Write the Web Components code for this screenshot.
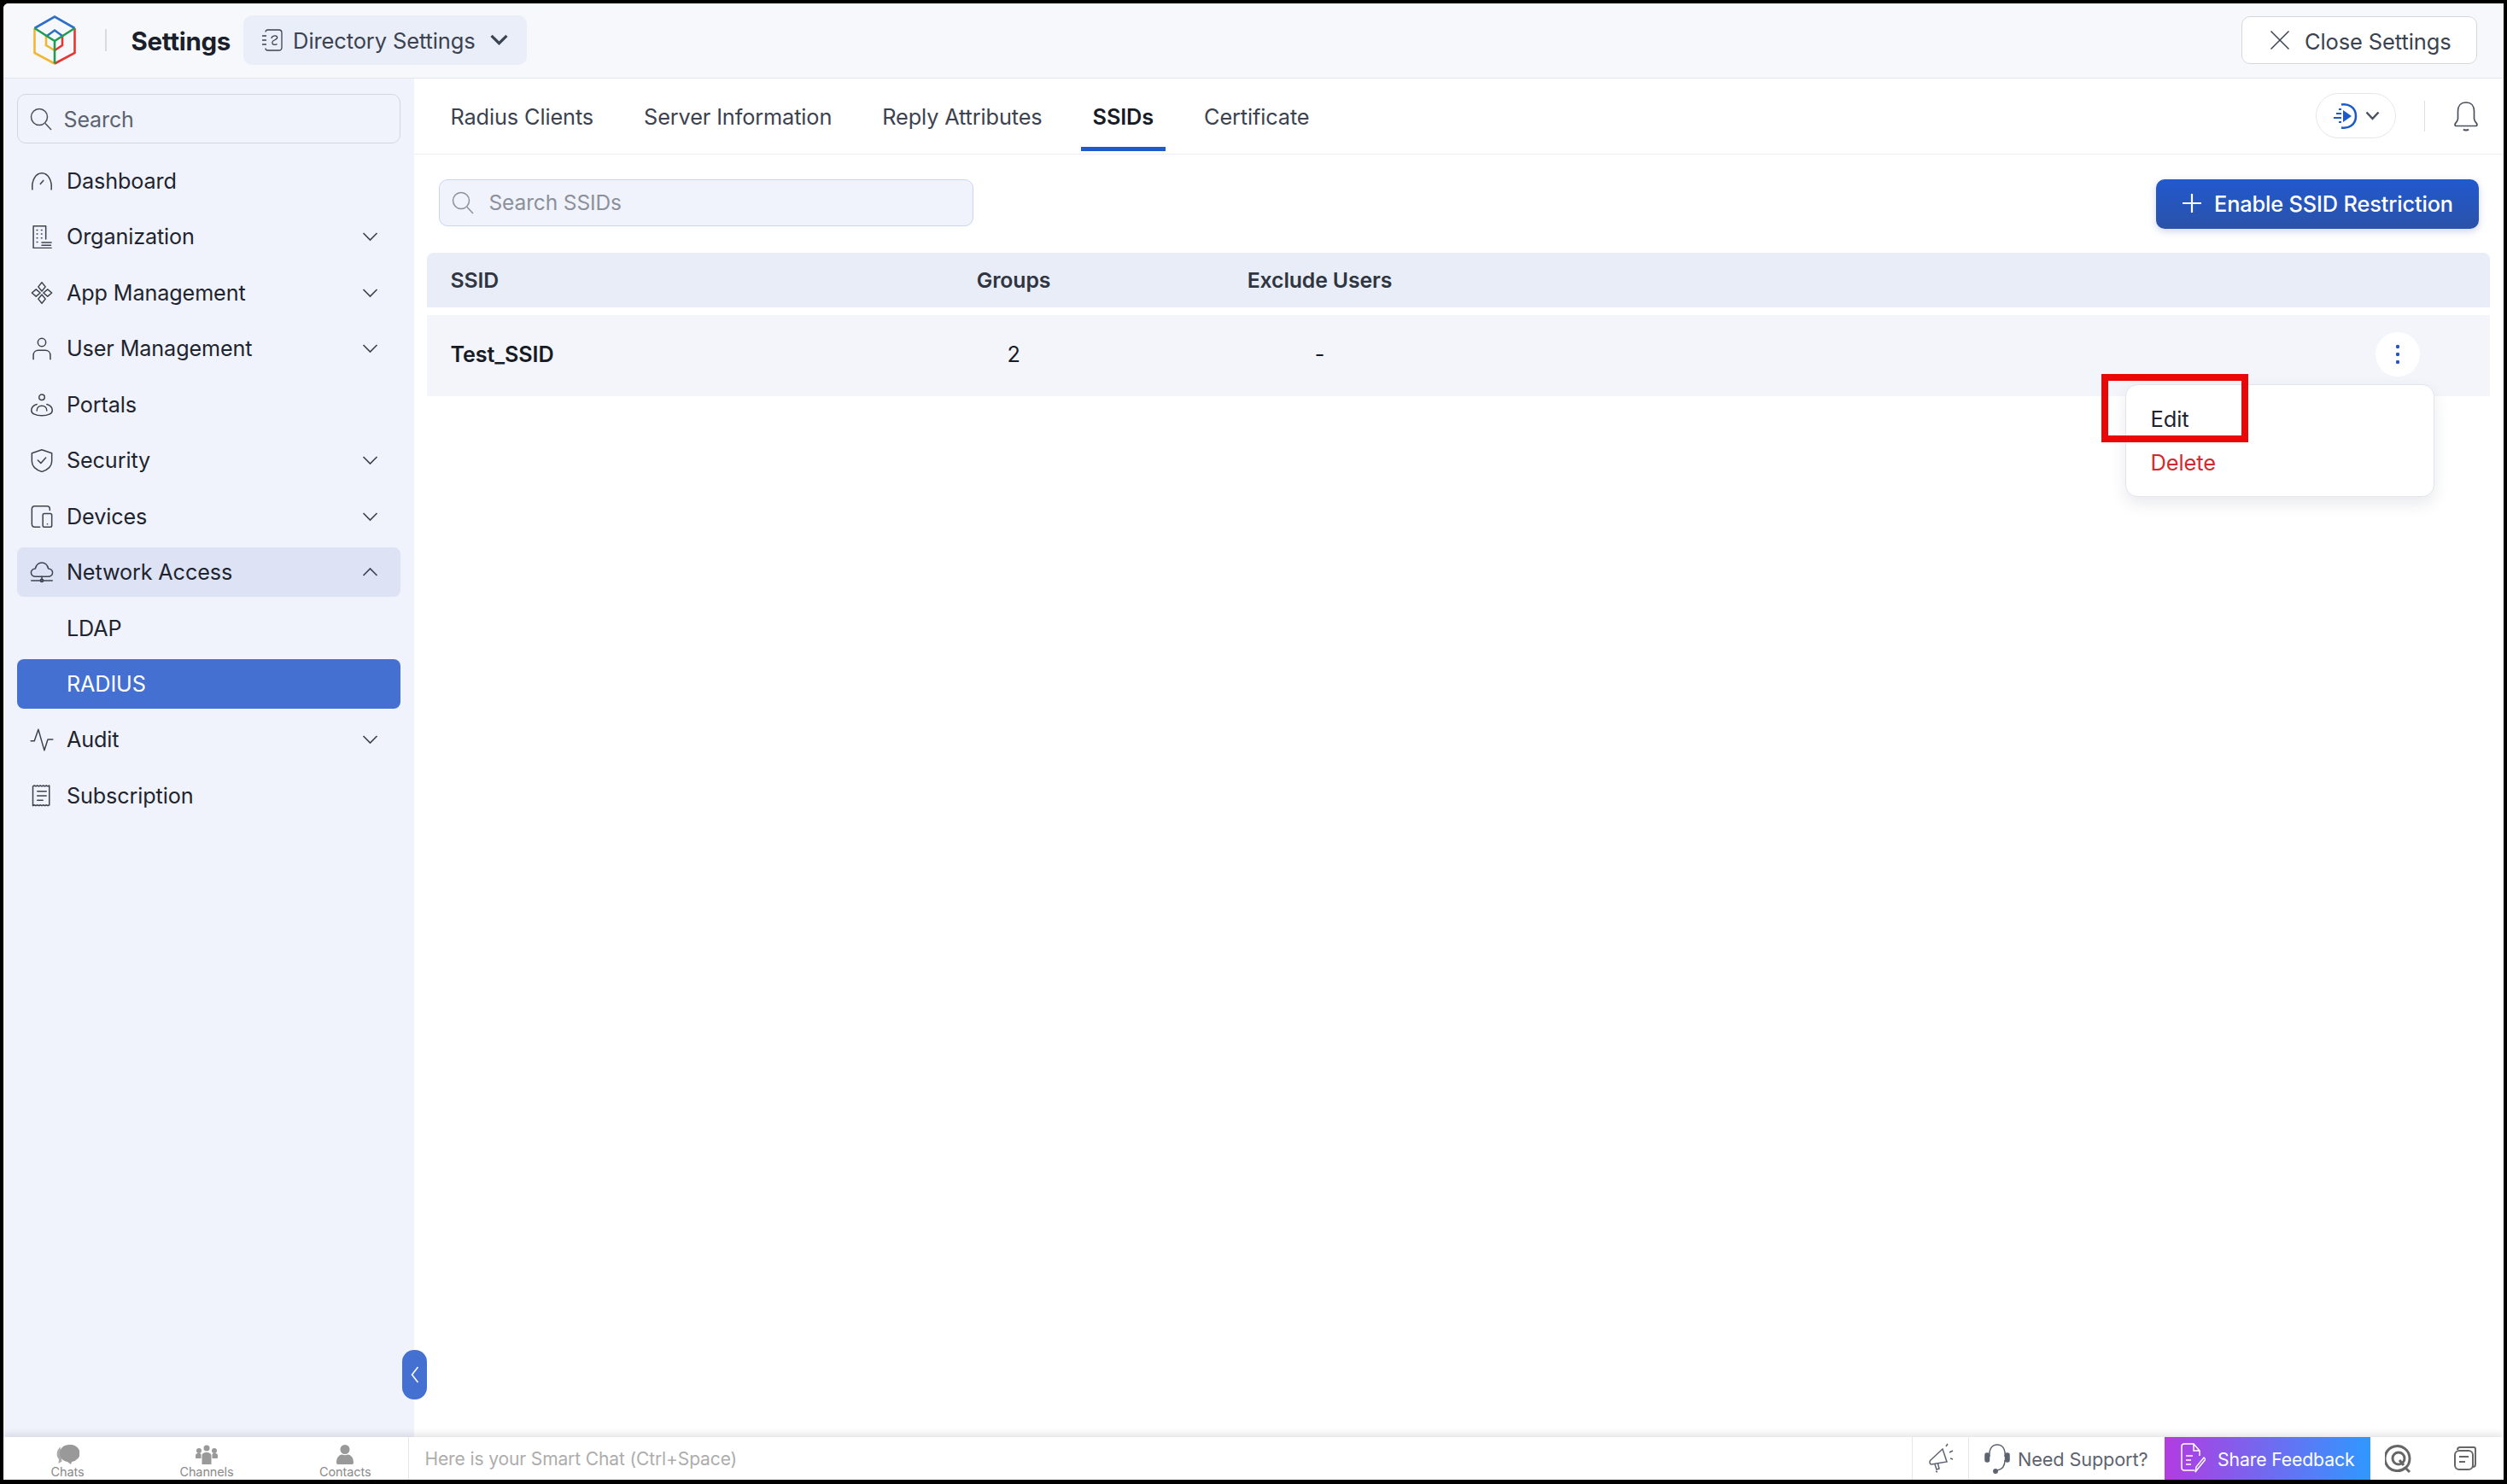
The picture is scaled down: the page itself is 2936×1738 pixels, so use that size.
<!DOCTYPE html>
<html>
<head>
<meta charset="utf-8">
<title>Settings</title>
<style>
  html, body { margin: 0; height: 100%; }
  body { background: #000; font-family: Inter, "Noto Sans", sans-serif; color: #1e2430; overflow: hidden; }
  svg[slot="icon"] { width: 28px; height: 28px; fill: none; stroke: #3d4450; stroke-width: 1.3; stroke-linecap: round; stroke-linejoin: round; }
</style>
</head>
<body>
<app-shell>
  <app-header slot="header"></app-header>
  <app-sidebar slot="sidebar">
    <nav-item label="Dashboard">
      <svg slot="icon" viewBox="0 0 24 24"><path d="M2.500 20.500C1.500 12 5.500 4 12 4s10.500 8 9.500 16.500"/><path d="M10.500 15l3-3.500"/></svg>
    </nav-item>
    <nav-item label="Organization" chevron="down">
      <svg slot="icon" viewBox="0 0 24 24"><path d="M3.500 23.500V1.500h12.500v13M3.500 23.500h18M12 18h9.500M12 20.800h9"/><path d="M7 5.500h.6M11.500 5.500h.6M7 9.500h.6M11.500 9.500h.6M7 13.500h.6M11.500 13.500h.6M7 17.500h.6"/></svg>
    </nav-item>
    <nav-item label="App Management" chevron="down">
      <svg slot="icon" viewBox="0 0 24 24"><path d="M12 1.500l3.600 4.400L12 10.300 8.400 5.900zM12 13.700l3.600 4.400-3.600 4.400-3.600-4.400zM6.200 8.400L10.400 12l-4.200 3.600L2 12zM17.800 8.400L22 12l-4.200 3.600L13.600 12z"/></svg>
    </nav-item>
    <nav-item label="User Management" chevron="down">
      <svg slot="icon" viewBox="0 0 24 24"><circle cx="12" cy="6" r="4"/><path d="M3.500 23v-4c0-3 2-5 5-5h7c3 0 5 2 5 5v4"/></svg>
    </nav-item>
    <nav-item label="Portals">
      <svg slot="icon" viewBox="0 0 24 24"><circle cx="12" cy="4.500" r="2.800"/><path d="M7 11.500c-3.500 1-5.500 3.500-5.500 6.200 0 3.300 4.500 5.300 10.500 5.300s10.500-2 10.500-5.300c0-2.700-2-5.200-5.500-6.200"/><path d="M7 18c0-3 2-5 5-5s5 2 5 5"/></svg>
    </nav-item>
    <nav-item label="Security" chevron="down">
      <svg slot="icon" viewBox="0 0 24 24"><path d="M12 1.500l10 3.500v8c0 5-4 8.500-10 10.500C6 21.500 2 18 2 13V5z"/><path d="M8 12l3 3 5-5.500"/></svg>
    </nav-item>
    <nav-item label="Devices" chevron="down">
      <svg slot="icon" viewBox="0 0 24 24"><path d="M20 5.500V4.500C20 2.500 19 1.500 17 1.500H5C3 1.500 2 2.500 2 4.500v15c0 2 1 3 3 3h5"/><rect x="13" y="9" width="9" height="13.500" rx="1.500"/><path d="M17.500 19.500h.2"/></svg>
    </nav-item>
    <nav-item label="Network Access" chevron="up" expanded>
      <svg slot="icon" viewBox="0 0 24 24"><path d="M6 16.500c-3 0-4.800-1.800-4.800-4s2-4 4.300-4C6.300 5 8.800 2.500 12 2.500s5.700 2.500 6.500 6c2.300 0 4.300 1.800 4.300 4s-1.800 4-4.800 4z"/><path d="M1.500 20.500h21M12 16.500v2.500"/><circle cx="12" cy="20.500" r="1.400"/></svg>
    </nav-item>
    <nav-item label="LDAP" sub></nav-item>
    <nav-item label="RADIUS" sub active></nav-item>
    <nav-item label="Audit" chevron="down">
      <svg slot="icon" viewBox="0 0 24 24"><path d="M1 13.500h3.500L8.500 2l6 21 3.500-11h5"/></svg>
    </nav-item>
    <nav-item label="Subscription">
      <svg slot="icon" viewBox="0 0 24 24"><path d="M3 2.500l1.500-.8 1.500.8 1.500-.8 1.500.8 1.500-.8 1.500.8 1.500-.8 1.500.8 1.500-.8 1.500.8 1.500-.8v19.500l-1.500.8-1.500-.8-1.500.8-1.500-.8-1.500.8-1.500-.8-1.500.8-1.500-.8-1.500.8-1.500-.8-1.500.8z"/><path d="M7.500 7.500h9M7.500 12h9M7.500 16.500h5.500"/></svg>
    </nav-item>
  </app-sidebar>
  <main-panel slot="main"></main-panel>
  <chat-bar slot="footer"></chat-bar>
</app-shell>

<script>
class AppShell extends HTMLElement {
  constructor() {
    super();
    this.attachShadow({ mode: "open" }).innerHTML = `
    <style>
      :host { display: grid; box-sizing: border-box; height: 1729px; margin: 4px 4px 5px 3.500px; background: #fff;
        grid-template-columns: 481px 1fr; grid-template-rows: 88px 1fr 50px; position: relative; overflow: hidden; border-radius: 6px 0 0 0;
        letter-spacing: -0.120px; }
      .h { grid-column: 1 / 3; display: block; }
      .s { display: block; min-height: 0; }
      .m { display: block; min-height: 0; }
      .f { grid-column: 1 / 3; display: block; }
      .handle { position: absolute; left: 467.500px; top: 1577px; width: 29px; height: 58px; background: #4470d2; border-radius: 14px;
        display: flex; align-items: center; justify-content: center; }
      .handle svg { width: 12px; height: 24px; fill: none; stroke: #fff; stroke-width: 1.600; }
    </style>
    <slot class="h" name="header"></slot>
    <slot class="s" name="sidebar"></slot>
    <slot class="m" name="main"></slot>
    <slot class="f" name="footer"></slot>
    <div class="handle"><svg viewBox="0 0 12 24"><path d="M9.500 3L2.500 12l7 9"/></svg></div>`;
  }
}

class AppHeader extends HTMLElement {
  constructor() {
    super();
    this.attachShadow({ mode: "open" }).innerHTML = `
    <style>
      :host { display: flex; align-items: center; height: 88px; box-sizing: border-box; background: #f7f8fc; border-bottom: 1.500px solid #e3e5ea;
        padding: 0 31px 2px 35px; font-family: Inter, sans-serif; }
      .logo { width: 50px; height: 58px; fill: none; stroke-width: 2.600; stroke-linejoin: miter; }
      .sep { width: 2px; height: 26px; background: #d9dbe0; margin: 0 29px 0 34px; }
      .title { font-size: 29.500px; font-weight: 700; color: #1a1f2b; letter-spacing: -0.300px; padding-top: 3px; }
      .pill { display: flex; align-items: center; margin-left: 15px; height: 58px; width: 332px; box-sizing: border-box; padding: 0 22px 0 21px;
        background: #e9eef9; border-radius: 10px; color: #3b4250; font-size: 25.500px; }
      .pill svg.doc { width: 25px; height: 26px; fill: none; stroke: #3b4250; stroke-width: 1.300; margin-right: 12px; }
      .pill span { flex: 1; white-space: nowrap; padding-top: 2px; }
      .pill svg.chev { width: 21px; height: 13px; fill: none; stroke: #3b4250; stroke-width: 3; }
      .close { margin-left: auto; display: flex; align-items: center; gap: 17px; box-sizing: border-box; height: 56px; width: 276px; padding-left: 32px;
        background: #fff; border: 1.500px solid #d5d7dd; border-radius: 10px; color: #3b4250; font-size: 25.500px; white-space: nowrap; }
      .close span { padding-top: 3px; }
      .close svg { width: 24px; height: 24px; fill: none; stroke: #3b4250; stroke-width: 1.500; }
    </style>
    <svg class="logo" viewBox="0 0 50 58">
      <path stroke="#2f6fc4" d="M1.500 15L25 1.500 48.500 15"/>
      <path stroke="#2f6fc4" d="M16 24l9-6.500 9 6.500"/>
      <path stroke="#f2b632" d="M1.500 15v29L25 56.500M15 24v11l10 6"/>
      <path stroke="#e5362f" d="M48.500 15v29L25 56.500M34 24v11l-9 6"/>
      <path stroke="#1f9d55" d="M1.500 15L25 30l23.500-15M25 30v26.500"/>
    </svg>
    <div class="sep"></div>
    <div class="title">Settings</div>
    <div class="pill">
      <svg class="doc" viewBox="0 0 25 26"><path d="M5 3.500c0-1.500 1-2.500 2.500-2.500h13c2 0 3.500 1.500 3.500 3.500v17c0 2-1.500 3.500-3.500 3.500h-13C6 25 5 24 5 22.500"/><path d="M1 8h5M1 13h5M1 18h5"/><path d="M12 11c0-3 5-4 6.500-2 1 2-1 3-3 4-2 .8-3 2-2.500 4 .5 1.500 4 2 5.500 .5"/></svg>
      <span>Directory Settings</span>
      <svg class="chev" viewBox="0 0 20 12"><path d="M1.500 1.500L10 10l8.500-8.500"/></svg>
    </div>
    <div class="close">
      <svg viewBox="0 0 24 24"><path d="M1.500 1.500l21 21M22.500 1.500l-21 21"/></svg>
      <span>Close Settings</span>
    </div>`;
  }
}

class AppSidebar extends HTMLElement {
  constructor() {
    super();
    this.attachShadow({ mode: "open" }).innerHTML = `
    <style>
      :host { display: flex; flex-direction: column; height: 100%; box-sizing: border-box; background: #f0f3fb; padding: 18px 16px 0 16.500px; font-family: Inter, sans-serif; }
      .search { display: flex; align-items: center; gap: 13.500px; box-sizing: border-box; height: 58px; padding-left: 14px; margin-bottom: 15px;
        border: 1.500px solid #d2d6de; border-radius: 10px; color: #5b6270; font-size: 25px; }
      .search span { padding-top: 1px; }
      .search svg { width: 26px; height: 28px; fill: none; stroke: #4a505c; stroke-width: 1.500; }
      .list { display: flex; flex-direction: column; gap: 7.450px; }
    </style>
    <div class="search">
      <svg viewBox="0 0 26 28"><circle cx="11" cy="12" r="9.500"/><path d="M18 19.500l7 7.500"/></svg>
      <span>Search</span>
    </div>
    <div class="list"><slot></slot></div>`;
  }
}

class NavItem extends HTMLElement {
  constructor() {
    super();
    const chev = this.getAttribute("chevron");
    const d = chev == "up" ? "M1.500 10L9.500 2l8 8" : "M1.500 2l8 8 8-8";
    this.attachShadow({ mode: "open" }).innerHTML = `
    <style>
      :host { display: flex; align-items: center; height: 58px; box-sizing: border-box; padding: 0 26px 0 15px; border-radius: 8px; color: #1e2430; font-size: 25.200px; }
      :host([expanded]) { background: #dde3f4; }
      :host([active]) { background: #4470d2; color: #fff; }
      .ic { width: 28px; height: 28px; margin-right: 15px; display: flex; flex: none; }
      .lb { flex: 1; white-space: nowrap; }
      .ch { width: 19px; height: 12px; fill: none; stroke: #3d4450; stroke-width: 1.700; }
    </style>
    <span class="ic"><slot name="icon"></slot></span>
    <span class="lb">${this.getAttribute("label")}</span>
    ${chev ? `<svg class="ch" viewBox="0 0 19 12"><path d="${d}"/></svg>` : ""}`;
  }
}

class TabBar extends HTMLElement {
  constructor() {
    super();
    this.attachShadow({ mode: "open" }).innerHTML = `
    <style>
      :host { display: flex; align-items: stretch; height: 88.500px; box-sizing: border-box; border-bottom: 1.500px solid #eceef2; padding-left: 29px; padding-right: 29px; font-family: Inter, sans-serif; }
      .tabs { display: flex; gap: 31px; }
      .tab { position: relative; padding: 2px 14px 0; display: flex; align-items: center; color: #3b4250; font-size: 25.300px; white-space: nowrap; box-sizing: border-box; }
      .tab.on { color: #161b26; font-weight: 600; }
      .tab.on::after { content: ""; position: absolute; left: 0; right: 0; bottom: 3px; height: 5px; background: #1f5acb; }
      .right { margin-left: auto; display: flex; align-items: center; }
      .guide { display: flex; align-items: center; justify-content: center; gap: 9px; width: 94px; height: 53px; box-sizing: border-box; border: 1.500px solid #e4e6ea; border-radius: 27px; }
      .guide svg.p { width: 30px; height: 32px; }
      .guide svg.c { width: 17px; height: 11px; fill: none; stroke: #4a505c; stroke-width: 2.500; }
      .sep { width: 1.500px; height: 36px; background: #dcdfe4; margin: 0 33px; }
      .bell { width: 30px; height: 36px; fill: none; stroke: #4a505c; stroke-width: 1.700; stroke-linejoin: round; }
    </style>
    <div class="tabs">
      <div class="tab">Radius Clients</div>
      <div class="tab">Server Information</div>
      <div class="tab">Reply Attributes</div>
      <div class="tab on">SSIDs</div>
      <div class="tab">Certificate</div>
    </div>
    <div class="right">
      <div class="guide">
        <svg class="p" viewBox="0 0 30 32"><path d="M11 2.500c8-1.500 17 3 17 13.500s-9 15-17 13.500" fill="none" stroke="#1f5acb" stroke-width="2.600"/><path d="M13 9l10 7-10 7z" fill="#1f5acb"/><path d="M8 8h3M5 13h6M2 18h9M8 23h3" stroke="#1f5acb" stroke-width="2.200" fill="none"/></svg>
        <svg class="c" viewBox="0 0 17 11"><path d="M1.500 1.500l7 7.500 7-7.500"/></svg>
      </div>
      <div class="sep"></div>
      <svg class="bell" viewBox="0 0 30 36"><path d="M2 28c0-2 3-3 3.500-7V12C5.500 6 9 2 15 2s9.500 4 9.500 10v9c.5 4 3.500 5 3.500 7 0 1-1 1.500-2 1.500H4c-1 0-2-.5-2-1.500z"/><path d="M12 33.500c1.500 1.300 4.500 1.300 6 0" stroke-width="2.200"/></svg>
    </div>`;
  }
}

class RowMenu extends HTMLElement {
  constructor() {
    super();
    this.attachShadow({ mode: "open" }).innerHTML = `
    <style>
      :host { position: absolute; right: 65px; top: 81px; width: 362.500px; height: 132px; box-sizing: border-box; background: #fff; border: 1.500px solid #e3e5ea; border-radius: 14px;
        box-shadow: 0 8px 18px rgba(40,50,80,.10); padding: 14px 29px; font-size: 25.500px; display: flex; flex-direction: column; z-index: 2; }
      .it { height: 51px; display: flex; align-items: center; color: #1e2430; }
      .it.del { color: #d32a2f; }
      .mark { position: absolute; left: -29px; top: -13px; width: 172px; height: 80px; box-sizing: border-box; border: 8px solid #e90707; }
    </style>
    <div class="it">Edit</div>
    <div class="it del">Delete</div>
    <div class="mark"></div>`;
  }
}

class SsidTable extends HTMLElement {
  constructor() {
    super();
    this.attachShadow({ mode: "open" }).innerHTML = `
    <style>
      :host { display: block; padding: 0 16px 0 15px; font-family: Inter, sans-serif; }
      .r { display: grid; grid-template-columns: 512px 295px 422px 1fr; align-items: center; box-sizing: border-box; padding-left: 28px; }
      .c { text-align: center; justify-self: center; white-space: nowrap; }
      .hd { height: 64px; background: #e9edf8; border-radius: 8px 8px 0 0; font-weight: 600; font-size: 24.800px; color: #2f3541; margin-bottom: 9px; }
      .row { position: relative; height: 95px; background: #f4f5fb; font-size: 25.200px; color: #161b26; padding-bottom: 3px; }
      .row b { font-weight: 600; }
      .kebab { position: absolute; right: 82px; top: 20px; width: 52px; height: 52px; border-radius: 50%; background: #fff; display: flex; align-items: center; justify-content: center; }
      .kebab svg { width: 6px; height: 26px; fill: #2a55b8; }
    </style>
    <div class="r hd"><div>SSID</div><div class="c">Groups</div><div class="c">Exclude Users</div></div>
    <div class="r row">
      <b>Test_SSID</b><div class="c">2</div><div class="c">-</div>
      <div class="kebab"><svg viewBox="0 0 6 26"><circle cx="3" cy="4" r="2.200"/><circle cx="3" cy="13" r="2.200"/><circle cx="3" cy="22" r="2.200"/></svg></div>
      <row-menu></row-menu>
    </div>`;
  }
}

class MainPanel extends HTMLElement {
  constructor() {
    super();
    this.attachShadow({ mode: "open" }).innerHTML = `
    <style>
      :host { display: block; height: 100%; background: #fff; font-family: Inter, sans-serif; }
      .bar { display: flex; justify-content: space-between; align-items: flex-start; padding: 29px 29px 29px 29px; height: 115.500px; box-sizing: border-box; }
      .find { display: flex; align-items: center; gap: 18px; width: 626px; height: 55px; box-sizing: border-box; padding-left: 14px; background: #f0f3fb; border: 1.500px solid #c8d6f0; border-radius: 10px; color: #8b909a; font-size: 24.500px; }
      .find svg { width: 26px; height: 28px; fill: none; stroke: #8b909a; stroke-width: 1.500; }
      .add { display: flex; align-items: center; gap: 14px; height: 58px; width: 378px; box-sizing: border-box; padding-left: 30px; padding-bottom: 1px; border-radius: 10px; color: #fff; font-size: 25.300px; font-weight: 500; white-space: nowrap;
        background: linear-gradient(#2259cf, #2a52a8); box-shadow: 0 3px 8px rgba(40,70,150,.22); }
      .add svg { width: 24px; height: 24px; fill: none; stroke: #fff; stroke-width: 2.200; }
    </style>
    <tab-bar></tab-bar>
    <div class="bar">
      <div class="find"><svg viewBox="0 0 26 28"><circle cx="11" cy="12" r="9.500"/><path d="M18 19.500l7 7.500"/></svg>Search SSIDs</div>
      <div class="add"><svg viewBox="0 0 24 24"><path d="M12 1v22M1 12h22"/></svg>Enable SSID Restriction</div>
    </div>
    <ssid-table></ssid-table>`;
  }
}

class ChatBar extends HTMLElement {
  constructor() {
    super();
    this.attachShadow({ mode: "open" }).innerHTML = `
    <style>
      :host { display: flex; align-items: stretch; height: 50px; background: #fff; box-shadow: 0 -3px 8px rgba(60,60,70,.14); position: relative; font-family: Inter, sans-serif; }
      .tabs { width: 475.500px; display: grid; grid-template-columns: 151px 175px 149.500px; box-sizing: border-box; border-right: 1.500px solid #e6e7ea; }
      .t { display: flex; flex-direction: column; align-items: center; padding-top: 9px; color: #8a8a8a; font-size: 14.500px; line-height: 14px; overflow: hidden; }
      .t svg { width: 28px; height: 23px; fill: #999; flex: none; margin-bottom: 2px; }
      .chat { flex: 1; display: flex; align-items: center; padding-left: 18.500px; padding-top: 1px; color: #adadad; font-size: 21px; white-space: nowrap; }
      .cell { display: flex; align-items: center; box-sizing: border-box; flex: none; }
      .mega { width: 67px; justify-content: center; border-left: 1.500px solid #e6e7ea; border-right: 1.500px solid #e6e7ea; }
      .mega svg, .sup svg { fill: none; stroke: #5d6470; stroke-width: 1.500; }
      .mega svg { width: 30px; height: 36px; }
      .sup { width: 229px; padding-left: 18px; gap: 9px; color: #5d6470; font-size: 21.700px; white-space: nowrap; }
      .sup span, .fb span { padding-top: 2px; }
      .sup svg { width: 30px; height: 40px; }
      .fb { width: 241px; gap: 14px; padding-left: 18px; color: #fff; font-size: 21.200px; white-space: nowrap; background: linear-gradient(90deg, #b23ce0, #2f98ff); }
      .fb svg { width: 30px; height: 40px; fill: none; stroke: #fff; stroke-width: 1.500; flex: none; }
      .ico { justify-content: center; }
      .ico svg { fill: none; stroke: #666; }
    </style>
    <div class="tabs">
      <div class="t"><svg viewBox="0 0 28 23"><path d="M5.500 2.500C1.500 6 0 13 4 17l-.5 5 4-2.500" fill="#aaa"/><path d="M16 0a11 10 0 0 1 3 20l-1 3-4-3C8 19 5 15 5 10 5 4 10 0 16 0z"/></svg>Chats</div>
      <div class="t"><svg viewBox="0 0 28 23"><circle cx="14" cy="4" r="3.500"/><circle cx="5" cy="7" r="3"/><circle cx="23" cy="7" r="3"/><path d="M1 12.500c0-2 2-2.500 4-2.500 1 0 2 .3 2.500 1v5H2c-.6 0-1-.5-1-1zM27 12.500c0-2-2-2.500-4-2.500-1 0-2 .3-2.500 1v5H26c.6 0 1-.5 1-1zM8.500 13c0-3 2.500-4 5.500-4s5.500 1 5.500 4v10h-11z"/></svg>Channels</div>
      <div class="t"><svg viewBox="0 0 28 23"><circle cx="14" cy="5.500" r="5.500"/><path d="M4 21c0-6 3-9 6.500-9.500 2 1 5 1 7 0C21 12 24 15 24 21c0 1.500-1 2-2 2H6c-1 0-2-.5-2-2z"/></svg>Contacts</div>
    </div>
    <div class="chat">Here is your Smart Chat (Ctrl+Space)</div>
    <div class="cell mega"><svg viewBox="0 0 30 36"><path d="M3 20L17 7l5 15-18 3c-2 0-3-3-1-5z"/><path d="M8 25l2 6 3-1-1.500-6M21 4l2-3M25 11l4-2M26 18l3 1M9 33l2 1"/></svg></div>
    <div class="cell sup"><svg viewBox="0 0 30 40"><path d="M6 18C5 9 9 4 15 4s10 5 9 14M24 22c0 7-3 11-9 12"/><rect x="1" y="14" width="4.500" height="10" rx="2" fill="#5d6470"/><rect x="24.500" y="14" width="4.500" height="10" rx="2" fill="#5d6470"/><circle cx="13" cy="35" r="2.200" fill="#5d6470"/></svg><span>Need Support?</span></div>
    <div class="cell fb"><svg viewBox="0 0 30 40"><path d="M17 34H5c-2 0-3-1-3-3V6c0-2 1-3 3-3h11l7 8v6M16 3v8h7"/><path d="M7 17h8M7 22h6M7 27h6"/><path d="M18 36l1-6 9-11 2 2-9 11z"/></svg><span>Share Feedback</span></div>
    <div class="cell ico" style="width:66px"><svg viewBox="0 0 32 36" width="32" height="36" stroke-width="3"><path d="M29 34l-5-5a14.500 14.500 0 1 1 5-11c0 6-2 9-5 11"/><circle cx="16" cy="18" r="7"/><path d="M17 20l5 6"/></svg></div>
    <div class="cell ico" style="width:90px"><svg viewBox="0 0 28 32" width="28" height="32" stroke-width="2"><path d="M5 6c0-2 1-3 3-3h16c1 0 2 1 2 2v18c0 2-1 3-3 3"/><rect x="2" y="7" width="21" height="22" rx="5"/><path d="M7 14h11M7 20h7"/></svg></div>`;
  }
}

customElements.define("app-shell", AppShell);
customElements.define("app-header", AppHeader);
customElements.define("app-sidebar", AppSidebar);
customElements.define("nav-item", NavItem);
customElements.define("tab-bar", TabBar);
customElements.define("row-menu", RowMenu);
customElements.define("ssid-table", SsidTable);
customElements.define("main-panel", MainPanel);
customElements.define("chat-bar", ChatBar);
</script>
</body>
</html>
